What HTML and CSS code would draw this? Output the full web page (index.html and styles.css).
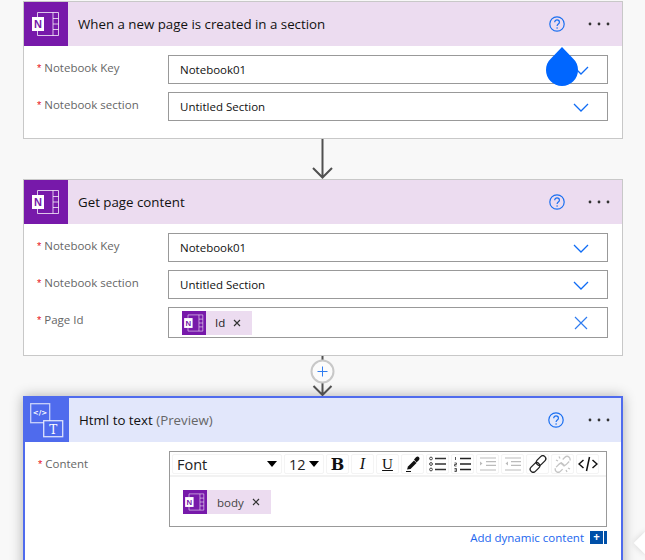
FILE: index.html
```html
<!DOCTYPE html>
<html lang="en">
<head>
  <meta charset="UTF-8" />
  <title>Flow designer</title>
  <meta name="viewport" content="width=device-width, initial-scale=1.0" />
  <link rel="stylesheet" href="styles.css">
</head>
<body>
  <svg class="defs" width="0" height="0">
    <defs>
      <g id="onenote">
        <path d="M13.500 15v-4.500h21v23h-21v-5M29 10.500v23M29 16.500h5.500M29 22h5.500M29 27.500h5.500" fill="none" stroke="#fff" stroke-opacity="0.75" stroke-width="1"/>
        <rect x="8" y="15" width="12" height="14" fill="#fff"/>
        <text x="14" y="26" text-anchor="middle" class="note-n">N</text>
      </g>
      <path id="chev" d="M1 1l7 7 7-7" fill="none" stroke="#0f6cf5" stroke-width="1.300"/>
      <g id="help">
        <circle cx="8" cy="8" r="7.200" fill="none" stroke="#1a6ff0" stroke-width="1.200"/>
        <path d="M5.700 6.200c0-3 4.700-3 4.700 0 0 1.800-2.300 1.800-2.300 3.700" fill="none" stroke="#1a6ff0" stroke-width="1.200"/>
        <circle cx="8.100" cy="12" r="0.800" fill="#1a6ff0"/>
      </g>
      <g id="dots">
        <circle cx="3" cy="2" r="1.400"/>
        <circle cx="12" cy="2" r="1.400"/>
        <circle cx="21" cy="2" r="1.400"/>
      </g>
    </defs>
  </svg>

  <div class="flow">
    <div class="card">
      <div class="card-head">
        <div class="head-icon"><svg width="44" height="44" viewBox="0 0 44 44"><use href="#onenote"/></svg></div>
        <div class="card-title">When a new page is created in a section</div>
        <svg class="help" width="16" height="16"><use href="#help"/></svg>
        <svg class="dots" width="24" height="4"><use href="#dots"/></svg>
      </div>
      <div class="card-body">
        <div class="row">
          <label class="lbl"><span class="req">*</span>Notebook Key</label>
          <div class="input"><span>Notebook01</span><svg class="chev" width="16" height="9"><use href="#chev"/></svg></div>
        </div>
        <div class="row">
          <label class="lbl"><span class="req">*</span>Notebook section</label>
          <div class="input"><span>Untitled Section</span><svg class="chev" width="16" height="9"><use href="#chev"/></svg></div>
        </div>
      </div>
    </div>

    <svg class="link" width="600" height="40" viewBox="0 0 600 40">
      <path d="M299.500 0v38M290 29l9.500 9.500 9.500-9.500" fill="none" stroke="#505050" stroke-width="2"/>
    </svg>

    <div class="card">
      <div class="card-head">
        <div class="head-icon"><svg width="44" height="44" viewBox="0 0 44 44"><use href="#onenote"/></svg></div>
        <div class="card-title">Get page content</div>
        <svg class="help" width="16" height="16"><use href="#help"/></svg>
        <svg class="dots" width="24" height="4"><use href="#dots"/></svg>
      </div>
      <div class="card-body">
        <div class="row">
          <label class="lbl"><span class="req">*</span>Notebook Key</label>
          <div class="input"><span>Notebook01</span><svg class="chev" width="16" height="9"><use href="#chev"/></svg></div>
        </div>
        <div class="row">
          <label class="lbl"><span class="req">*</span>Notebook section</label>
          <div class="input"><span>Untitled Section</span><svg class="chev" width="16" height="9"><use href="#chev"/></svg></div>
        </div>
        <div class="row">
          <label class="lbl"><span class="req">*</span>Page Id</label>
          <div class="input input-token">
            <div class="token">
              <div class="token-icon"><svg width="24" height="24" viewBox="5 5 34 34"><use href="#onenote"/></svg></div>
              <span class="token-text">Id</span>
              <svg class="token-x" width="8" height="8" viewBox="0 0 8 8"><path d="M1 1l6 6M7 1l-6 6" stroke="#333" stroke-width="1.200"/></svg>
            </div>
            <svg class="clear" width="14" height="14" viewBox="0 0 14 14"><path d="M1 1l12 12M13 1L1 13" stroke="#2f7cf0" stroke-width="1.200"/></svg>
          </div>
        </div>
      </div>
    </div>

    <svg class="link" width="600" height="40" viewBox="0 0 600 40">
      <path d="M299.500 0v5M290.500 30l9 9 9-9M299.500 27v11" fill="none" stroke="#505050" stroke-width="2"/>
      <circle cx="299.500" cy="15.500" r="11" fill="#fbfbfb" stroke="#c8c8c8" stroke-width="2"/>
      <path d="M299.500 10.500v10M294.500 15.500h10" stroke="#2f7cf0" stroke-width="1"/>
    </svg>

    <div class="card card-active">
      <div class="card-head">
        <div class="head-icon">
          <svg width="44" height="44" viewBox="0 0 44 44">
            <rect x="5.700" y="5.700" width="19" height="19" fill="none" stroke="#fff" stroke-opacity="0.7" stroke-width="1.300"/>
            <rect x="18.700" y="22.700" width="19" height="16" fill="#4f6bed" stroke="#fff" stroke-opacity="0.8" stroke-width="1.300"/>
            <text x="15" y="17" text-anchor="middle" class="ico-code">&lt;/&gt;</text>
            <text x="28.200" y="35.500" text-anchor="middle" class="ico-t">T</text>
          </svg>
        </div>
        <div class="card-title">Html to text <span class="preview">(Preview)</span></div>
        <svg class="help" width="16" height="16"><use href="#help"/></svg>
        <svg class="dots" width="24" height="4"><use href="#dots"/></svg>
      </div>
      <div class="card-body card-body-tall">
        <div class="row row-editor">
          <label class="lbl"><span class="req">*</span>Content</label>
          <div class="field">
            <div class="editor">
              <div class="toolbar">
                <div class="tool tool-select tool-font"><span>Font</span><i class="caret"></i></div>
                <div class="tool tool-select tool-size"><span>12</span><i class="caret"></i></div>
                <div class="tool tool-b">B</div>
                <div class="tool tool-i">I</div>
                <div class="tool tool-u">U</div>
                <div class="tool">
                  <svg width="18" height="18" viewBox="0 0 18 18"><path d="M2 16.500h5" stroke="#111" stroke-width="1"/><path d="M3 14.500l1-3 6-6 2.500 2.500-6 6z" fill="#111"/><path d="M10 4.500l2-2.200c1-1 2.300-1 3 0s.7 2-.3 3L12.500 7.500z" fill="#111"/></svg>
                </div>
                <div class="tool">
                  <svg width="18" height="16" viewBox="0 0 18 16"><g fill="none" stroke="#444"><circle cx="2" cy="2.500" r="1.400"/><circle cx="2" cy="8" r="1.400"/><circle cx="2" cy="13.500" r="1.400"/></g><path d="M6 2.500h11M6 8h11M6 13.500h11" stroke="#333" stroke-width="1.400"/></svg>
                </div>
                <div class="tool">
                  <svg width="18" height="16" viewBox="0 0 18 16"><path d="M1.500 1v3M.5 7h2v1.500h-2V10h2M.5 12.500h2v3h-2M.5 14h2" fill="none" stroke="#444" stroke-width="0.900"/><path d="M6 2.500h11M6 8h11M6 13.500h11" stroke="#222" stroke-width="1.500"/></svg>
                </div>
                <div class="tool">
                  <svg width="18" height="14" viewBox="0 0 18 14"><path d="M1 1h16M7 4.700h10M7 8.300h10M1 13h16" stroke="#bbb" stroke-width="1.200"/><path d="M1 4.500l2.500 2-2.500 2z" fill="#bbb"/></svg>
                </div>
                <div class="tool">
                  <svg width="18" height="14" viewBox="0 0 18 14"><path d="M1 1h16M7 4.700h10M7 8.300h10M1 13h16" stroke="#bbb" stroke-width="1.200"/><path d="M4 4.500l-2.500 2 2.500 2z" fill="#bbb"/></svg>
                </div>
                <div class="tool">
                  <svg width="18" height="18" viewBox="0 0 18 18"><g fill="none" stroke="#222" stroke-width="1.300"><rect x="0.500" y="9.500" width="11" height="6" rx="3" transform="rotate(-45 6 12.500)"/><rect x="6.500" y="2.500" width="11" height="6" rx="3" transform="rotate(-45 12 5.500)"/></g></svg>
                </div>
                <div class="tool">
                  <svg width="18" height="18" viewBox="0 0 18 18"><g fill="none" stroke="#c4c4c4" stroke-width="1.300"><rect x="0.500" y="9.500" width="10" height="6" rx="3" stroke-dasharray="11 3" transform="rotate(-45 6 12.500)"/><rect x="7.500" y="2.500" width="10" height="6" rx="3" stroke-dasharray="11 3" transform="rotate(135 12 5.500)"/><path d="M2 5l2 1M5 1.500l1 2M14 13l2 1M12 15l1 2"/></g></svg>
                </div>
                <div class="tool">
                  <svg width="20" height="16" viewBox="0 0 20 16"><path d="M5.500 4L1 8l4.500 4M14.500 4L19 8l-4.500 4M11.500 1L8.500 15" fill="none" stroke="#111" stroke-width="1.500"/></svg>
                </div>
              </div>
              <div class="editor-area">
                <div class="token">
                  <div class="token-icon"><svg width="24" height="24" viewBox="5 5 34 34"><use href="#onenote"/></svg></div>
                  <span class="token-text token-text-dim">body</span>
                  <svg class="token-x" width="8" height="8" viewBox="0 0 8 8"><path d="M1 1l6 6M7 1l-6 6" stroke="#333" stroke-width="1.200"/></svg>
                </div>
              </div>
            </div>
            <div class="dynamic">
              <a class="dynamic-link">Add dynamic content</a>
              <span class="dynamic-plus">+</span>
              <span class="dynamic-bar"></span>
            </div>
          </div>
        </div>
      </div>
    </div>

    <svg class="drop" width="34" height="40" viewBox="0 0 34 40"><path d="M17 0L6 11.500C2.500 14.500 1 18.500 1 23a16 16 0 0 0 32 0c0-4.500-1.500-8.500-5-11.500z" fill="#0066ff"/></svg>
  </div>

  <div class="edge-handle"></div>
</body>
</html>
```

FILE: styles.css
```css
* {
  box-sizing: border-box;
}

html, body {
  height: 100%;
  overflow: hidden;
}

body {
  margin: 0;
  background-color: #f8f8f8;
  color: #222;
  font-family: 'Open Sans', 'Noto Sans', sans-serif;
  font-size: 11.5px;
}

.defs {
  display: block;
  height: 0;
}

.note-n {
  font-family: 'Liberation Sans', sans-serif;
  font-size: 11px;
  font-weight: bold;
  fill: #7719aa;
}

.ico-code {
  font-family: 'DejaVu Sans', sans-serif;
  font-size: 7px;
  font-weight: bold;
  fill: #fff;
}

.ico-t {
  font-family: 'DejaVu Serif', serif;
  font-size: 12px;
  fill: #fff;
}

.flow {
  position: relative;
  width: 600px;
  margin-left: 23px;
  padding-top: 1px;
}

.link {
  display: block;
  position: relative;
  z-index: 2;
}

.card {
  background-color: #fff;
  border: 1px solid #c8c8c8;
}

.card-head {
  display: flex;
  align-items: center;
  height: 44px;
  padding-right: 11px;
  background-color: #ecdcf0;
}

.head-icon {
  width: 44px;
  height: 44px;
  flex: none;
  background-color: #7719aa;
}

.head-icon svg {
  display: block;
}

.card-title {
  margin-left: 10px;
  font-size: 13.3px;
  color: #111;
  white-space: nowrap;
}

.preview {
  color: #666;
}

.help {
  margin-left: auto;
  flex: none;
}

.dots {
  margin-left: 22px;
  flex: none;
  fill: #333;
}

.card-body {
  display: flex;
  flex-direction: column;
  gap: 8px;
  padding: 9px 14px 17px 13px;
}

.row {
  display: flex;
}

.lbl {
  width: 131px;
  flex: none;
  padding-top: 5px;
  color: #666;
  white-space: nowrap;
}

.req {
  margin-right: 3px;
  font-family: 'Liberation Sans', sans-serif;
  font-size: 11px;
  color: #e81123;
}

.input {
  display: flex;
  align-items: center;
  justify-content: space-between;
  flex: 1;
  height: 29px;
  padding: 0 18px 0 11px;
  border: 1px solid #999;
  color: #111;
}

.input-token {
  height: 31px;
  padding-left: 13px;
  padding-right: 19px;
}

.chev {
  display: block;
  margin-top: 1px;
}

.clear {
  display: block;
}

.token {
  display: inline-flex;
  align-items: center;
  height: 24px;
  background-color: #ecdcf0;
  padding-right: 11px;
}

.token-icon {
  width: 24px;
  height: 24px;
  background-color: #7719aa;
}

.token-icon svg {
  display: block;
}

.token-text {
  margin-left: 9px;
  color: #222;
}

.token-text-dim {
  margin-left: 10px;
  color: #444;
}

.token-x {
  margin-left: 8px;
}

/* selected card */
.card-active {
  height: 300px;
  border: 2px solid #4f6bed;
  box-shadow: 0 0 12px rgba(0, 0, 0, 0.3);
}

.card-active .card-head {
  padding-right: 10px;
  background-color: #e2e7fb;
}

.card-active .head-icon {
  background-color: #4f6bed;
}

.card-active .dots {
  margin-left: 23px;
}

.field {
  flex: 1;
  min-width: 0;
}

.editor {
  height: 76px;
  border: 1px solid #999;
}

.toolbar {
  display: flex;
  gap: 2px;
  height: 25px;
  padding: 2px 0 0 2px;
  border-bottom: 2px solid #f2f2f2;
}

.tool {
  display: flex;
  align-items: center;
  justify-content: center;
  width: 23px;
  height: 20px;
  border: 1px solid #f4f4f4;
  border-radius: 2px;
  color: #111;
}

.tool-select {
  justify-content: space-between;
  padding: 0 4px;
  font-size: 14.5px;
  color: #222;
}

.tool-font {
  width: 110px;
}

.tool-size {
  width: 40px;
}

.caret {
  width: 0;
  height: 0;
  border-left: 5px solid transparent;
  border-right: 5px solid transparent;
  border-top: 6px solid #000;
}

.tool-b {
  font-family: 'DejaVu Serif', serif;
  font-size: 16px;
  font-weight: bold;
}

.tool-i {
  font-family: 'Liberation Serif', serif;
  font-size: 16px;
  font-style: italic;
}

.tool-u {
  font-family: 'Liberation Serif', serif;
  font-size: 15px;
  text-decoration: underline;
}

.editor-area {
  padding: 13px 0 0 13px;
}

.dynamic {
  display: flex;
  align-items: center;
  justify-content: flex-end;
  margin-top: 3px;
  height: 15px;
}

.dynamic-link {
  margin-right: 6px;
  color: #2266ee;
}

.dynamic-plus {
  width: 13px;
  height: 13px;
  line-height: 12px;
  text-align: center;
  background-color: #0050a8;
  color: #fff;
  font-weight: bold;
}

.dynamic-bar {
  width: 3px;
  height: 13px;
  margin-left: 1px;
  background-color: #0050a8;
}

/* the drop marker sits over the first card */
.drop {
  position: absolute;
  left: 522px;
  top: 47px;
  z-index: 3;
}

.edge-handle {
  position: absolute;
  left: 637px;
  top: 535px;
  width: 16px;
  height: 16px;
  background-color: #fff;
  transform: rotate(45deg);
  box-shadow: 0 0 6px rgba(0, 0, 0, 0.15);
}
```
